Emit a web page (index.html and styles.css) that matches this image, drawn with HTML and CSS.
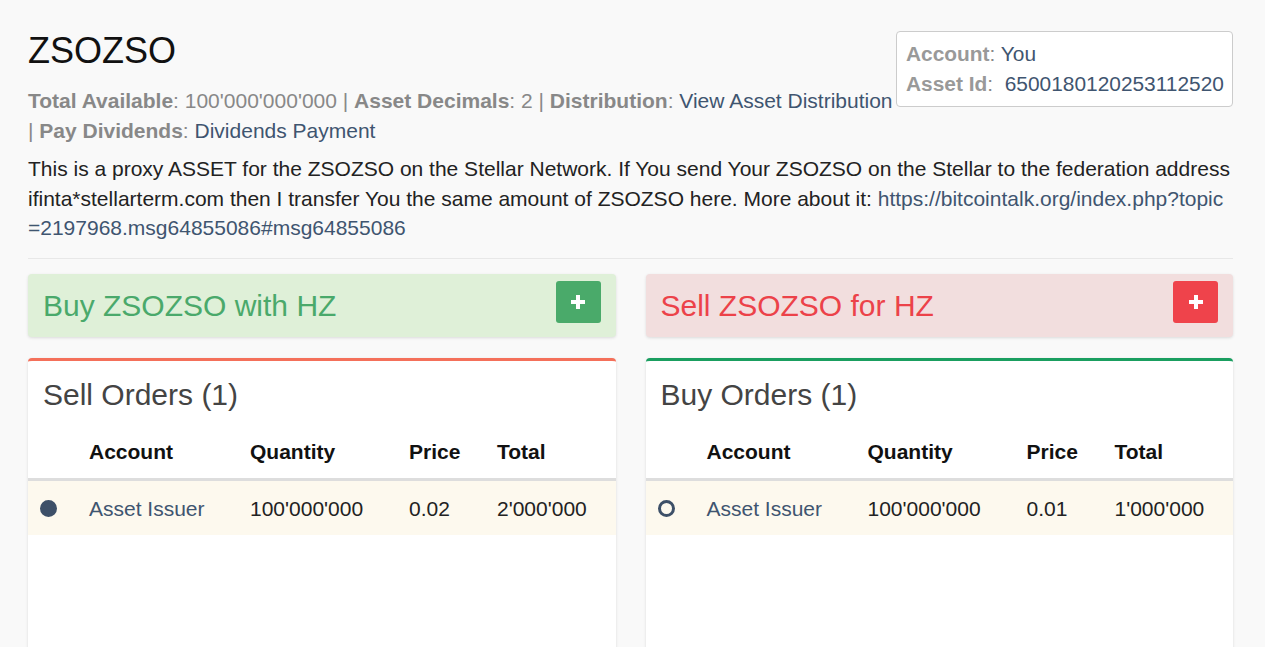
FILE: index.html
```html
<!DOCTYPE html>
<html lang="en">
  <head>
    <meta charset="UTF-8" />
    <meta name="viewport" content="width=device-width, initial-scale=1.0" />
    <title>ZSOZSO</title>
    <link rel="stylesheet" href="styles.css">
  </head>
  <body>
    <div class="container">
      <div class="asset-header">
        <div class="account-box">
          <div><b>Account</b>: <a href="#">You</a></div>
          <div><b>Asset Id</b>:&nbsp; <a href="#">6500180120253112520</a></div>
        </div>
        <h1>ZSOZSO</h1>
        <p class="asset-meta">
          <b>Total Available</b>: 100'000'000'000 | <b>Asset Decimals</b>: 2 |
          <b>Distribution</b>: <a href="#">View Asset Distribution</a>
          <span class="nowrap">| <b>Pay Dividends</b>: <a href="#">Dividends Payment</a></span>
        </p>
        <p class="asset-desc">
          This is a proxy ASSET for the ZSOZSO on the Stellar Network. If You send Your ZSOZSO on the Stellar to the federation address ifinta*stellarterm.com then I transfer You the same amount of ZSOZSO here. More about it:
          <a class="long-link" href="#">https://bitcointalk.org/index.php?topic=2197968.msg64855086#msg64855086</a>
        </p>
      </div>
      <hr />
      <div class="market">
        <div class="column">
          <div class="trade-panel buy">
            <span>Buy ZSOZSO with HZ</span>
            <button class="btn-plus" type="button">
              <svg width="14" height="14" viewBox="0 0 14 14"><path d="M5 0h4v5h5v4H9v5H5V9H0V5h5z" fill="#fff"/></svg>
            </button>
          </div>
          <div class="orders sell-orders">
            <h2>Sell Orders (1)</h2>
            <table>
              <thead>
                <tr><th class="col-dot"></th><th class="col-acc">Account</th><th class="col-qty">Quantity</th><th class="col-price">Price</th><th>Total</th></tr>
              </thead>
              <tbody>
                <tr><td class="col-dot"><span class="dot filled"></span></td><td><a href="#">Asset Issuer</a></td><td>100'000'000</td><td>0.02</td><td>2'000'000</td></tr>
              </tbody>
            </table>
          </div>
        </div>
        <div class="column">
          <div class="trade-panel sell">
            <span>Sell ZSOZSO for HZ</span>
            <button class="btn-plus" type="button">
              <svg width="14" height="14" viewBox="0 0 14 14"><path d="M5 0h4v5h5v4H9v5H5V9H0V5h5z" fill="#fff"/></svg>
            </button>
          </div>
          <div class="orders buy-orders">
            <h2>Buy Orders (1)</h2>
            <table>
              <thead>
                <tr><th class="col-dot"></th><th class="col-acc">Account</th><th class="col-qty">Quantity</th><th class="col-price">Price</th><th>Total</th></tr>
              </thead>
              <tbody>
                <tr><td class="col-dot"><span class="dot"></span></td><td><a href="#">Asset Issuer</a></td><td>100'000'000</td><td>0.01</td><td>1'000'000</td></tr>
              </tbody>
            </table>
          </div>
        </div>
      </div>
    </div>
  </body>
</html>
```

FILE: styles.css
```css
body {
  font-family: "Liberation Sans", Arial, sans-serif;
  background-color: #f9f9f9;
  margin: 0;
  padding: 0;
  color: #222;
  font-size: 21px;
}
a {
  color: #3f5570;
  text-decoration: none;
}
.nowrap {
  white-space: nowrap;
}
.container {
  padding: 0 32px 0 28px;
}
.asset-header {
  padding-top: 31px;
}
.asset-header h1 {
  font-size: 36px;
  font-weight: normal;
  margin: 0 0 15px;
  line-height: 40px;
  color: #111;
}
.account-box {
  float: right;
  background: #fff;
  border: 1px solid #ccc;
  border-radius: 4px;
  padding: 7px 8px 7px 9px;
  width: 318px;
  line-height: 30px;
  font-size: 20.9px;
  color: #888;
  white-space: nowrap;
}
.account-box b {
  color: #999;
}
.asset-meta {
  margin: 0 0 8px;
  line-height: 30px;
  font-size: 21px;
  color: #888;
}
.asset-desc {
  margin: 0;
  line-height: 29.5px;
}
.long-link {
  word-break: break-all;
}
hr {
  border: 0;
  border-top: 1px solid #e8e8e8;
  margin: 15px 0 15px;
}
.market {
  display: flex;
  gap: 30px;
}
.column {
  flex: 1;
}
.trade-panel {
  display: flex;
  justify-content: space-between;
  align-items: flex-start;
  height: 63px;
  box-sizing: border-box;
  padding: 7px 15px 0 15px;
  border-radius: 4px;
  box-shadow: 0 1px 3px rgba(0, 0, 0, 0.12);
  font-size: 30px;
}
.trade-panel span {
  line-height: 50px;
}
.trade-panel.buy {
  background: #dff0d8;
  color: #4aa96b;
}
.trade-panel.sell {
  background: #f2dede;
  color: #ec4249;
}
.btn-plus {
  width: 45px;
  height: 42px;
  border: none;
  border-radius: 3px;
  display: flex;
  align-items: center;
  justify-content: center;
  padding: 0;
  cursor: pointer;
}
.buy .btn-plus {
  background: #4aaa6a;
}
.sell .btn-plus {
  background: #ef434b;
}
.orders {
  margin-top: 21px;
  background: #fff;
  border-radius: 4px;
  box-shadow: 0 1px 3px rgba(0, 0, 0, 0.12);
  min-height: 300px;
}
.sell-orders {
  border-top: 3px solid #f4705a;
}
.buy-orders {
  border-top: 3px solid #1a9e60;
}
.orders h2 {
  margin: 0;
  padding: 15px 15px 0;
  font-size: 30px;
  font-weight: normal;
  color: #444;
  line-height: 38px;
}
.orders table {
  width: 100%;
  border-collapse: collapse;
  margin-top: 17px;
}
.orders th {
  text-align: left;
  font-weight: bold;
  color: #111;
  padding: 10px 0 15px;
  border-bottom: 3px solid #ddd;
  line-height: 22px;
}
.orders td {
  padding: 16px 0 14px;
  background: #fdf9ee;
  line-height: 24px;
  color: #222;
}
.col-dot {
  width: 61px;
  padding-left: 12px !important;
  box-sizing: border-box;
}
.col-acc {
  width: 161px;
}
.col-qty {
  width: 159px;
}
.col-price {
  width: 88px;
}
.dot {
  display: block;
  width: 17px;
  height: 17px;
  border-radius: 50%;
  box-sizing: border-box;
  border: 3px solid #3d5068;
}
.dot.filled {
  background: #3d5068;
}
```
